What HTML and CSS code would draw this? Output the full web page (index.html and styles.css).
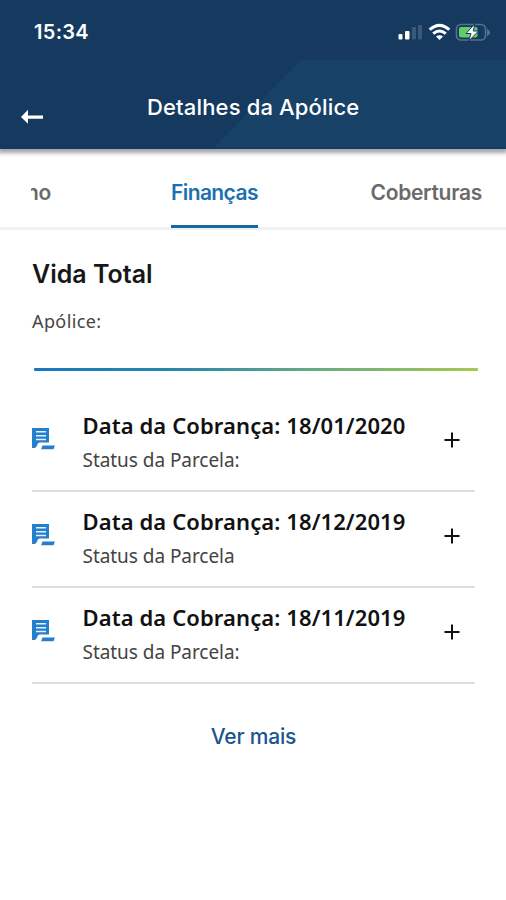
FILE: index.html
```html
<!DOCTYPE html>
<html lang="pt-BR">
<head>
<meta charset="utf-8">
<title>Detalhes da Apólice</title>
<link rel="stylesheet" href="styles.css">
</head>
<body>
<svg class="defs" width="0" height="0" aria-hidden="true">
  <symbol id="bill" viewBox="0 0 25 24">
    <path fill="#257fcb" d="M1 1h17v14.500h-9.500q-2 .5-2.500 3-.7 2.500-3 2.500H1Z"/>
    <path stroke="#e4f3ff" stroke-width="1.500" d="M5 4.800h10M5 8.700h10M5 12.400h10"/>
    <path fill="#257fcb" d="M11.500 18.500h12.500l-1.500 3.700H10Z"/>
  </symbol>
  <symbol id="plus" viewBox="0 0 16 16">
    <path stroke="#111" stroke-width="2" d="M8 .5v15M.5 8h15"/>
  </symbol>
</svg>
<header class="header">
  <div class="status">
    <span class="time">15:34</span>
    <svg class="indicators" width="94" height="20" viewBox="0 0 94 20">
      <g fill="#fff"><rect x="2.500" y="11" width="4" height="5.500" rx="1"/><rect x="9" y="8" width="4.500" height="8.500" rx="1"/></g>
      <g fill="#3c5878"><rect x="16" y="4" width="4" height="12.500" rx="1"/><rect x="22" y="2" width="4" height="14.500" rx="1"/></g>
      <g fill="none" stroke="#fff" stroke-width="3"><path d="M33.700 6.700q9.800-8.600 19.600 0M37.200 10.700q6.300-5.400 12.600 0"/></g>
      <path fill="#fff" d="M40 13.600q3.500-2.800 7 0L43.500 17Z"/>
      <rect x="60.500" y="1.500" width="29" height="15.500" rx="4.500" fill="none" stroke="#56718b" stroke-width="1.600"/>
      <path fill="#56718b" d="M91 5.500l4 4-4 4Z"/>
      <rect x="63" y="4" width="18.500" height="10.500" rx="2" fill="#63cc68"/>
      <path fill="#fff" stroke="#16395f" stroke-width="1" d="M78.800.8L70 10.500h5L72.800 18l9.700-10h-5.200Z"/>
    </svg>
  </div>
  <div class="bar">
    <svg class="back" width="24" height="16" viewBox="0 0 24 16"><path fill="#fff" d="M1 8l7-7.200V6.500h15v3.200H8v5.100Z"/></svg>
    <h1 class="title">Detalhes da Apólice</h1>
  </div>
</header>
<nav class="tabs">
  <span class="tab tab-cut"><span class="cut-text">no</span></span>
  <span class="tab tab-active">Finanças</span>
  <span class="tab tab-last">Coberturas</span>
</nav>
<main class="content">
  <h2 class="product">Vida Total</h2>
  <p class="policy">Apólice:</p>
  <div class="rule"></div>
  <ul class="list">
    <li class="row">
      <svg class="bill"><use href="#bill"/></svg>
      <div class="info"><strong class="date">Data da Cobrança: 18/01/2020</strong><span class="state">Status da Parcela:</span></div>
      <svg class="plus"><use href="#plus"/></svg>
    </li>
    <li class="row">
      <svg class="bill"><use href="#bill"/></svg>
      <div class="info"><strong class="date">Data da Cobrança: 18/12/2019</strong><span class="state">Status da Parcela</span></div>
      <svg class="plus"><use href="#plus"/></svg>
    </li>
    <li class="row">
      <svg class="bill"><use href="#bill"/></svg>
      <div class="info"><strong class="date">Data da Cobrança: 18/11/2019</strong><span class="state">Status da Parcela:</span></div>
      <svg class="plus"><use href="#plus"/></svg>
    </li>
  </ul>
  <a class="more">Ver mais</a>
</main>
</body>
</html>
```
FILE: styles.css
```css
* { box-sizing: border-box; margin: 0; padding: 0; }
body { width: 506px; height: 900px; background: #fff; font-family: Inter, sans-serif; overflow: hidden; }
svg { display: block; flex: none; }
.defs { position: absolute; }
.header {
  height: 149px;
  color: #fff;
  background: #16395f;
  border-bottom: 2px solid #123c68;
  box-shadow: 0 2px 4px 2px rgba(60, 50, 60, .45);
  background-image: linear-gradient(135deg, transparent 62px, #184168 62.700px);
  background-repeat: no-repeat;
  background-size: 293px 89px;
  background-position: 213px 60px;
}
.status { height: 60px; padding: 20px 16px 0 34px; display: flex; justify-content: space-between; }
.time { font-size: 20px; line-height: 24px; font-weight: 600; letter-spacing: .3px; }
.indicators { margin: 3px 0 0; }
.bar { display: flex; height: 87px; padding: 33px 0 0 20px; align-items: flex-start; }
.back { margin-top: 16px; }
.title { margin-left: 103px; font-size: 22px; line-height: 28px; font-weight: 500; letter-spacing: .15px; white-space: nowrap; }
.tabs {
  display: grid; grid-template-columns: 140px 87px 1fr; align-items: start; height: 81px; padding: 26px 24px 0 31px;
  border-bottom: 3px solid #f1f1f1; font-size: 21px; font-weight: 600; line-height: 36px; color: #6a6a6a;
}
.tab { white-space: nowrap; letter-spacing: -.3px; }
.tab-cut { width: 20px; overflow: hidden; display: flex; justify-content: flex-end; }
.tab-active { color: #1c70b0; height: 53px; border-bottom: 3px solid #16699f; letter-spacing: -.6px; }
.tab-last { justify-self: end; }
.content { padding: 26px 31px 0 32px; }
.product { font-size: 25px; line-height: 36px; font-weight: 600; color: #171717; }
.policy { margin-top: 15px; font: 400 18px/28px "Noto Sans", sans-serif; letter-spacing: .4px; color: #444; }
.rule { margin: 33px -3px 0 2px; height: 3px; border-radius: 1px; background: linear-gradient(90deg, #1679c0, #2b87ac 33%, #61a886 60%, #a5ca4f); }
.list { list-style: none; margin-top: 25px; font-family: "Noto Sans", sans-serif; }
.row { display: flex; height: 96px; border-bottom: 2px solid #dedede; }
.bill { width: 25px; height: 24px; margin-top: 31px; margin-left: -1px; }
.info { width: 362px; padding: 13px 0 0 26.500px; display: flex; flex-direction: column; white-space: nowrap; }
.date { font-size: 22px; line-height: 32px; font-weight: 600; letter-spacing: .1px; color: #111; }
.state { margin-top: 5px; font-size: 19px; line-height: 28px; font-weight: 400; letter-spacing: -.05px; color: #444; }
.plus { width: 16px; height: 16px; margin: 36px 0 0 26px; }
.more { display: block; margin-top: 37px; text-align: center; font-size: 21px; line-height: 32px; font-weight: 500; letter-spacing: -.2px; color: #1c548c; }
```
